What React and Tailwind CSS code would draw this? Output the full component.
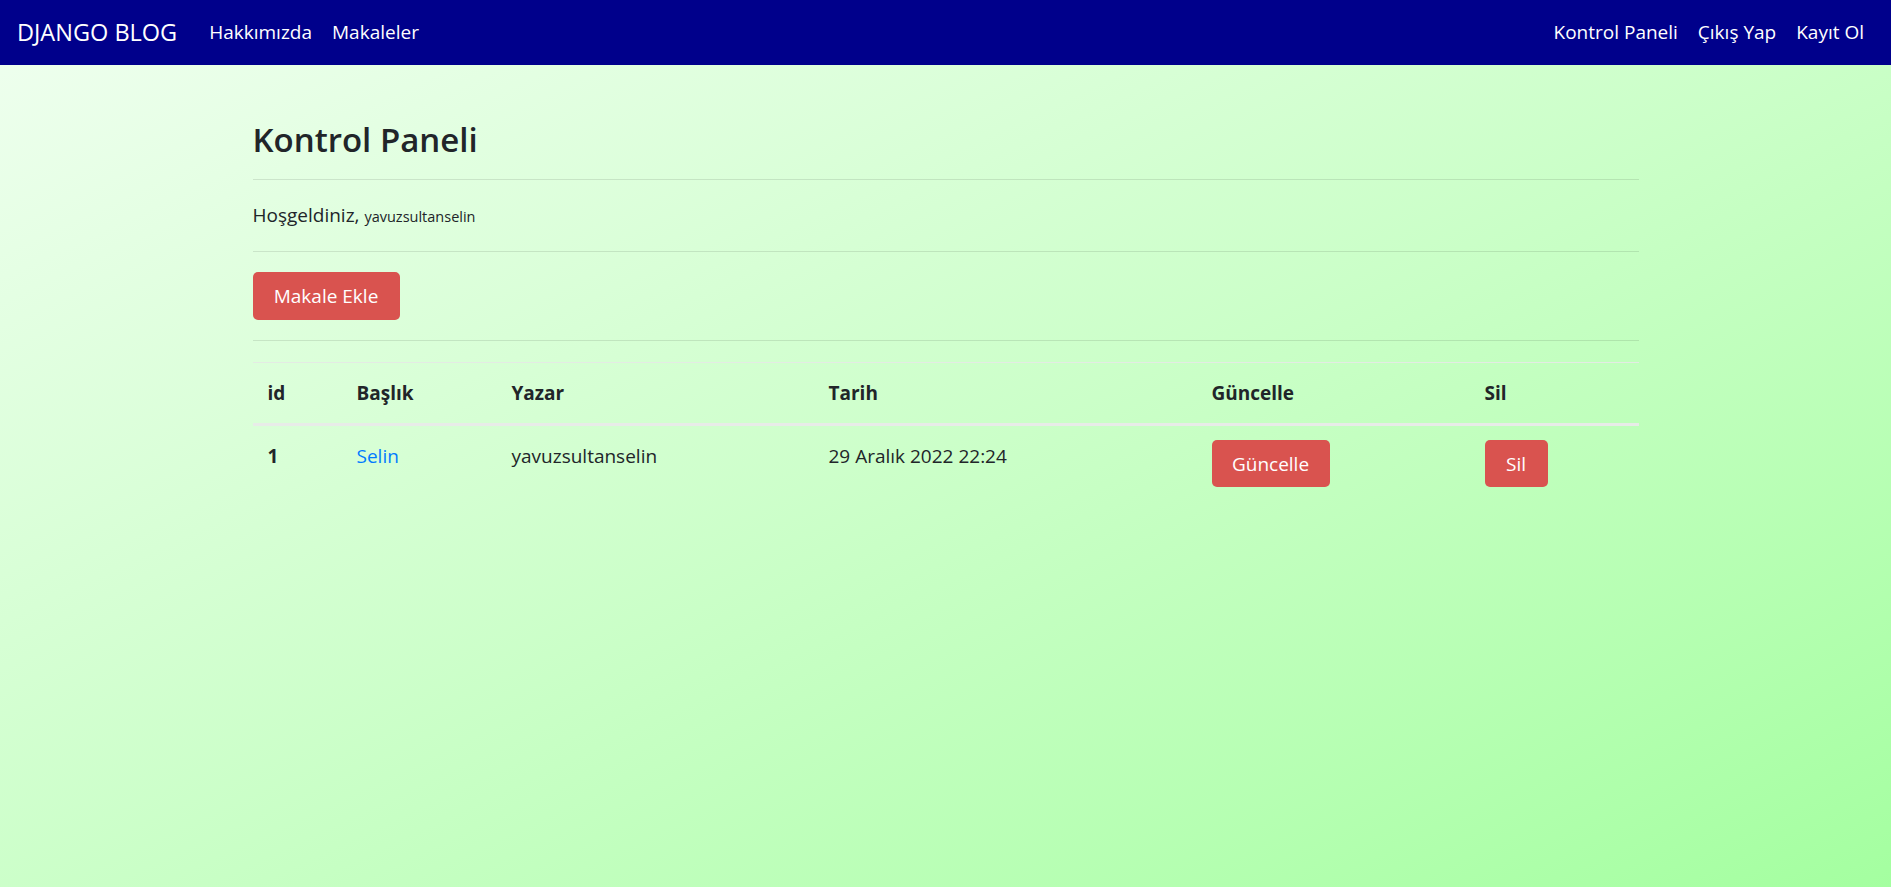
import React from 'react';

const font = { fontFamily: '"Open Sans", "Noto Sans", sans-serif' };

function NavBar() {
  return (
    <nav className="h-[65px] bg-[#00008b] flex items-center justify-between pl-[17px] pr-[17px] text-white">
      <div className="flex items-center">
        <span className="text-[23.5px] leading-none mr-[22px]">DJANGO BLOG</span>
        <a className="text-[19px] px-[10px]">Hakkımızda</a>
        <a className="text-[19px] px-[10px]">Makaleler</a>
      </div>
      <div className="flex items-center">
        <a className="text-[19px] px-[10px]">Kontrol Paneli</a>
        <a className="text-[19px] px-[10px]">Çıkış Yap</a>
        <a className="text-[19px] px-[10px]">Kayıt Ol</a>
      </div>
    </nav>
  );
}

function RedButton({ children, w }) {
  return (
    <button className={`${w} h-[47px] rounded-[5px] bg-[#d9534f] text-white text-[19px] flex items-center justify-center`}>
      {children}
    </button>
  );
}

export default function App() {
  return (
    <div className="min-h-screen bg-gradient-to-br from-[#f0fff0] to-[#a4ffa0] text-[#212529]" style={font}>
      <NavBar />
      <div className="w-[1386px] mx-auto">
        <h2 className="mt-[54px] text-[33px] leading-[41px] font-semibold">Kontrol Paneli</h2>
        <hr className="mt-[19px] border-0 border-t border-black/10" />
        <p className="mt-[21px] text-[19px] leading-[29px]">
          Hoşgeldiniz, <small className="text-[14.5px]">yavuzsultanselin</small>
        </p>
        <hr className="mt-[20px] border-0 border-t border-black/10" />
        <button className="mt-[20px] w-[147px] h-[48px] rounded-[5px] bg-[#d9534f] text-white text-[19px]">Makale Ekle</button>
        <hr className="mt-[20px] border-0 border-t border-black/10" />
        <table className="mt-[21px] w-full table-fixed border-collapse text-[19px] leading-[30px]">
          <colgroup>
            <col className="w-[89px]" />
            <col className="w-[155px]" />
            <col className="w-[317px]" />
            <col className="w-[383px]" />
            <col className="w-[273px]" />
            <col className="w-[169px]" />
          </colgroup>
          <thead>
            <tr className="text-left">
              <th className="p-[15px] border-t border-[#e4ebe4] border-b-[3px] border-b-[#e8ece8] font-bold">id</th>
              <th className="p-[15px] border-t border-[#e4ebe4] border-b-[3px] border-b-[#e8ece8] font-bold">Başlık</th>
              <th className="p-[15px] border-t border-[#e4ebe4] border-b-[3px] border-b-[#e8ece8] font-bold">Yazar</th>
              <th className="p-[15px] border-t border-[#e4ebe4] border-b-[3px] border-b-[#e8ece8] font-bold">Tarih</th>
              <th className="p-[15px] border-t border-[#e4ebe4] border-b-[3px] border-b-[#e8ece8] font-bold">Güncelle</th>
              <th className="p-[15px] border-t border-[#e4ebe4] border-b-[3px] border-b-[#e8ece8] font-bold">Sil</th>
            </tr>
          </thead>
          <tbody>
            <tr className="text-left align-top">
              <th className="px-[15px] pt-[15px] pb-[15px] font-bold">1</th>
              <td className="px-[15px] pt-[15px] pb-[15px]"><a className="text-[#007bff]">Selin</a></td>
              <td className="px-[15px] pt-[15px] pb-[15px]">yavuzsultanselin</td>
              <td className="px-[15px] pt-[15px] pb-[15px]">29 Aralık 2022 22:24</td>
              <td className="px-[15px] pt-[14px] pb-[15px]"><RedButton w="w-[118px]">Güncelle</RedButton></td>
              <td className="px-[15px] pt-[14px] pb-[15px]"><RedButton w="w-[63px]">Sil</RedButton></td>
            </tr>
          </tbody>
        </table>
      </div>
    </div>
  );
}
